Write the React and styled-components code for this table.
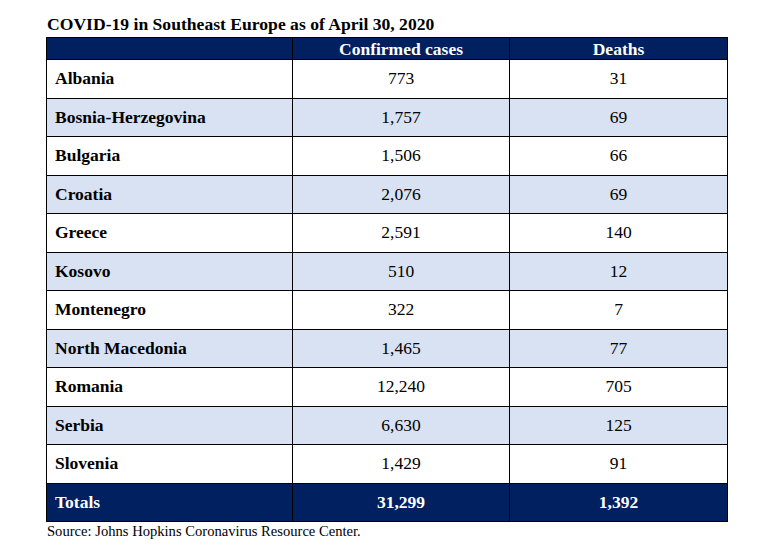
import React from "react";
import styled, { createGlobalStyle } from "styled-components";

const GlobalStyle = createGlobalStyle`
  body {
    margin: 0;
    background: #ffffff;
    font-family: "Liberation Serif", "Times New Roman", serif;
    color: #000000;
  }
`;

const Page = styled.div`
  padding: 14px 0 0 46px;
  width: 681px;
`;

const Title = styled.h1`
  margin: 0 0 3px 1px;
  font-size: 17.6px;
  line-height: 20px;
  font-weight: bold;
  white-space: nowrap;
`;

const Table = styled.table`
  width: 681px;
  border-collapse: collapse;
  table-layout: fixed;
  font-size: 17.5px;
`;

const HeadCell = styled.th`
  background: #002060;
  color: #ffffff;
  border: 1px solid #000000;
  height: 21px;
  padding: 0;
  font-weight: bold;
  text-align: center;
  line-height: 18px;
`;

const Row = styled.tr`
  background: ${(p) => (p.$shaded ? "#d9e2f3" : "#ffffff")};
`;

const Cell = styled.td`
  border: 1px solid #000000;
  height: 36.5px;
  padding: 0 8px 1px;
  line-height: 20px;
  text-align: ${(p) => (p.$name ? "left" : "center")};
  font-weight: ${(p) => (p.$name ? "bold" : "normal")};
`;

const TotalRow = styled.tr`
  background: #002060;
  color: #ffffff;
`;

const TotalCell = styled.td`
  border: 1px solid #000000;
  height: 36px;
  padding: 0 8px 1px;
  line-height: 20px;
  font-weight: bold;
  text-align: ${(p) => (p.$name ? "left" : "center")};
`;

const Source = styled.p`
  margin: 0 0 0 1px;
  font-size: 14.6px;
  line-height: 18px;
`;

const data = [
  ["Albania", "773", "31"],
  ["Bosnia-Herzegovina", "1,757", "69"],
  ["Bulgaria", "1,506", "66"],
  ["Croatia", "2,076", "69"],
  ["Greece", "2,591", "140"],
  ["Kosovo", "510", "12"],
  ["Montenegro", "322", "7"],
  ["North Macedonia", "1,465", "77"],
  ["Romania", "12,240", "705"],
  ["Serbia", "6,630", "125"],
  ["Slovenia", "1,429", "91"],
];

export default function App() {
  return (
    <>
      <GlobalStyle />
      <Page>
        <Title>COVID-19 in Southeast Europe as of April 30, 2020</Title>
        <Table>
          <colgroup>
            <col style={{ width: 246 }} />
            <col style={{ width: 217 }} />
            <col style={{ width: 218 }} />
          </colgroup>
          <thead>
            <tr>
              <HeadCell></HeadCell>
              <HeadCell>Confirmed cases</HeadCell>
              <HeadCell>Deaths</HeadCell>
            </tr>
          </thead>
          <tbody>
            {data.map(([country, cases, deaths], i) => (
              <Row key={country} $shaded={i % 2 === 1}>
                <Cell $name>{country}</Cell>
                <Cell>{cases}</Cell>
                <Cell>{deaths}</Cell>
              </Row>
            ))}
            <TotalRow>
              <TotalCell $name>Totals</TotalCell>
              <TotalCell>31,299</TotalCell>
              <TotalCell>1,392</TotalCell>
            </TotalRow>
          </tbody>
        </Table>
        <Source>Source: Johns Hopkins Coronavirus Resource Center.</Source>
      </Page>
    </>
  );
}
